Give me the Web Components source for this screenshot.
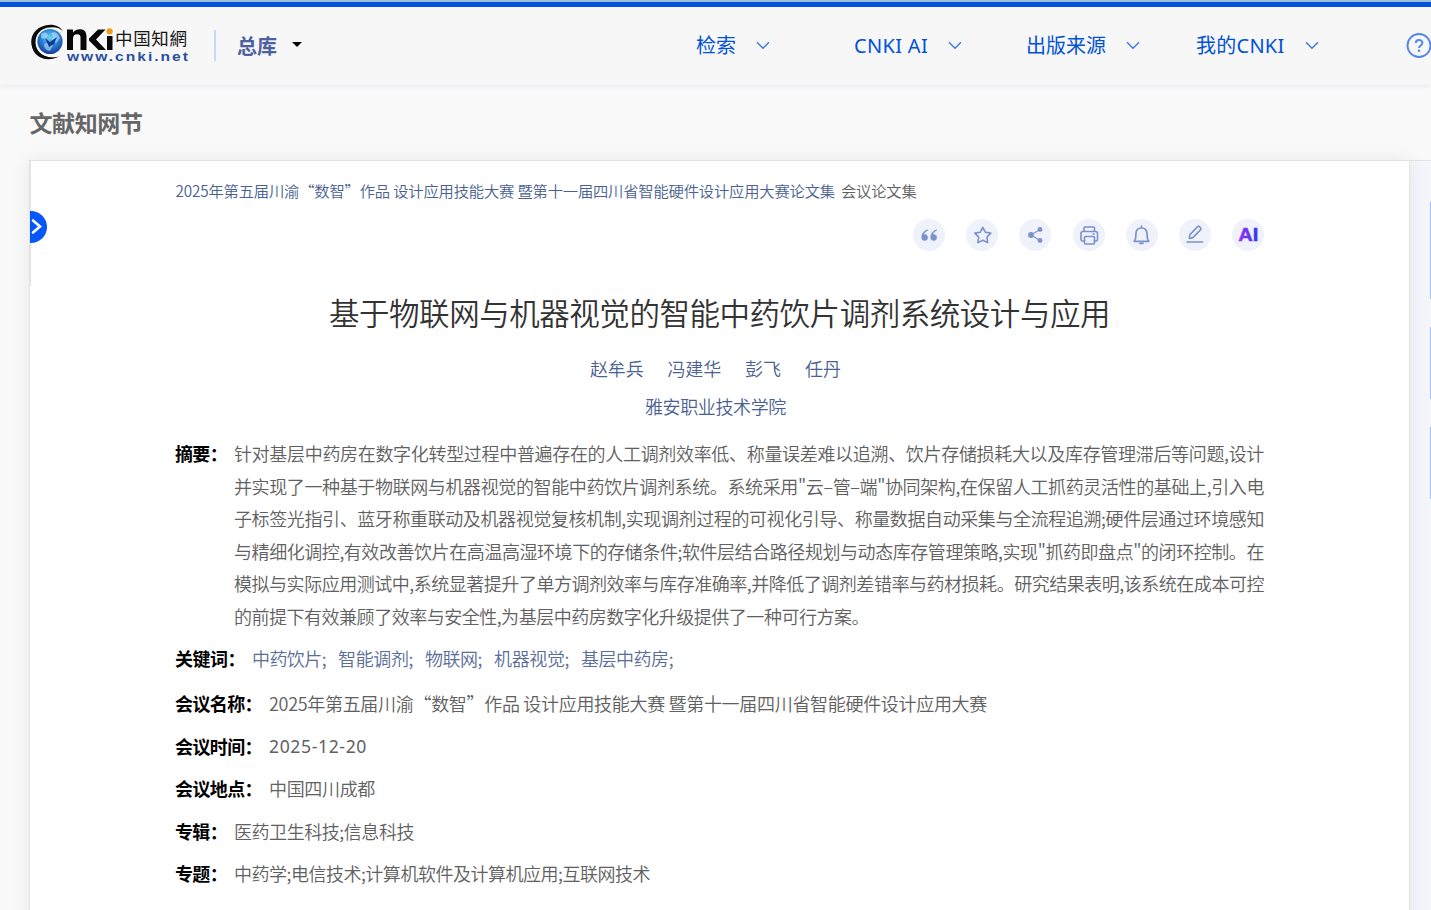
<!DOCTYPE html>
<html lang="zh-CN">
<head>
<meta charset="utf-8">
<title>文献知网节</title>
<style>
html,body{margin:0;height:910px;overflow:hidden}
body{background:#f9f9f9;font-family:"Noto Sans CJK SC",sans-serif}
</style>
</head>
<body>
<cnki-page></cnki-page>
<script>
/* A single line of text, spaced so that it spans exactly the width "w". */
class FitText extends HTMLElement{
  connectedCallback(){
    const root=this.attachShadow({mode:'open'});
    root.innerHTML='<style>:host{display:block;white-space:pre;flex:none}span{display:inline-block}</style><span><slot></slot></span>';
    this.fit();
    if(document.fonts)document.fonts.ready.then(()=>this.fit());
  }
  fit(){
    const span=this.shadowRoot.querySelector('span'),w=+this.getAttribute('w'),n=[...this.textContent].length;
    this.style.width='auto';
    span.style.letterSpacing='0px';
    const natural=span.getBoundingClientRect().width;
    span.style.letterSpacing=((w-natural)/n)+'px';
    this.style.width=w+'px';
  }
}
customElements.define('fit-text',FitText);

class CnkiLogo extends HTMLElement{
  connectedCallback(){
    this.attachShadow({mode:'open'}).innerHTML=`<style>:host{display:block;width:160px;height:44px}svg{display:block}</style>
<svg width="160" height="44" viewBox="0 0 160 44">
<defs><radialGradient id="g" cx=".5" cy=".35" r=".65"><stop offset="0" stop-color="#6fd3f5"/><stop offset=".5" stop-color="#2b86d8"/><stop offset="1" stop-color="#173a9a"/></radialGradient></defs>
<path d="M33.500 11C31 6 24 3.500 16 5.500C6 8 1 16 2.500 25C4.500 35 13 41.500 28 37.500C17 38.500 8.500 34 7 26C5 17 10 9.500 18 7.800C25 6.300 31 7.500 33.500 11Z" fill="#0b0b0b"/>
<path d="M3 26C5 37 17 43 30 36.500C20 39.500 10 36 6.500 26Z" fill="#0b0b0b"/>
<circle cx="21" cy="21.500" r="12.600" fill="url(#g)"/>
<path d="M12 14q4-4 7 1l-2 4-5-1zM22 13q6-3 9 5l-4 5-4-3 1-4zM15 24q6-3 9 1l-3 6q-6-1-6-7z" fill="#d9f5ff" opacity=".5"/>
<path d="M16 18l5 4 7-5-3 7-5 3z" fill="#103b91"/>
<path d="M38 30V9.500h6v3q3-3.500 7.500-3.200 6 .4 6 7v13.700h-6V17.500q0-3.300-3.300-3.300-4.200 0-4.200 4.300v11.500z" fill="#080808"/>
<path d="M69 9.500h7.500L67 19.500l10 10.500H69.500L60 20.500v-2z" fill="#080808"/>
<path d="M78 16h5.500v14H78z" fill="#080808"/><circle cx="80.600" cy="11.300" r="3.100" fill="#f39b12"/>
<text x="86" y="25" font-family="Noto Sans CJK SC" font-size="17.500" font-weight="400" fill="#161616" textLength="72" lengthAdjust="spacing">中国知網</text>
<text transform="translate(38 41) scale(1.300 1)" x="0" y="0" font-family="Liberation Sans" font-size="12" font-weight="700" fill="#284fa0" textLength="93" lengthAdjust="spacing">www.cnki.net</text>
</svg>`;
  }
}
customElements.define('cnki-logo',CnkiLogo);

class NavItem extends HTMLElement{
  connectedCallback(){
    this.attachShadow({mode:'open'}).innerHTML=`<style>
:host{display:flex;align-items:center;color:#0052d9;font:400 20px/30px "Noto Sans","Noto Sans CJK SC",sans-serif}
svg{display:block;flex:none;margin:-2px 0 0 20px}</style><slot></slot>
<svg width="14" height="9" viewBox="0 0 14 9"><path d="M1 1.300l6 6 6-6" fill="none" stroke="#3c78e2" stroke-width="1.400"/></svg>`;
  }
}
customElements.define('nav-item',NavItem);

class SiteHeader extends HTMLElement{
  connectedCallback(){
    this.attachShadow({mode:'open'}).innerHTML=`<style>
:host{display:flex;box-sizing:border-box;height:85px;padding-top:7px;background:linear-gradient(#a0bdd9 0 2px,#0052d9 2px 7px,#f7f7f7 7px);box-shadow:0 1px 4px #e6eaf0;position:relative}
cnki-logo{margin:13px 0 0 29px;width:160px;flex:none}
.rule{width:2px;height:31px;background:#c5d9fa;margin:23px 0 0 25px;flex:none}
.lib{margin:23.500px 0 0 21px;color:#4c61a0;font:700 20px/30px "Noto Sans CJK SC";flex:none}
.caret{width:0;height:0;border:5px solid transparent;border-top-color:#000;border-bottom:0;margin:35px 0 0 15px;flex:none}
nav{display:grid;grid-template-columns:158px 172px 170px 210px;margin:24px 0 0 394px;height:30px;flex:none}
.help{margin:25px 0 0 0;flex:none}
svg{display:block}
</style>
<cnki-logo></cnki-logo><div class="rule"></div><fit-text class="lib" w="40">总库</fit-text><div class="caret"></div>
<nav><nav-item><fit-text w="40">检索</fit-text></nav-item><nav-item><fit-text w="74">CNKI AI</fit-text></nav-item><nav-item><fit-text w="80">出版来源</fit-text></nav-item><nav-item><fit-text w="88.500">我的CNKI</fit-text></nav-item></nav>
<svg class="help" width="26" height="26" viewBox="0 0 26 26"><circle cx="13" cy="13.500" r="11.500" fill="none" stroke="#5288e8" stroke-width="1.900"/><path d="M9.800 11c0-4 6.600-4 6.600 0 0 2.300-3.300 2.300-3.300 5" fill="none" stroke="#5288e8" stroke-width="2"/><circle cx="13" cy="18.800" r="1.300" fill="#5288e8"/></svg>`;
  }
}
customElements.define('site-header',SiteHeader);

const ICONS={
quote:'<path d="M14.300 10.800c-3.700 1-5.600 4.200-5.600 7.700a3 3 0 1 0 3-3h-.8c.3-1.700 1.500-3 3.600-4zM23.300 10.800c-3.700 1-5.600 4.200-5.600 7.700a3 3 0 1 0 3-3h-.8c.3-1.700 1.500-3 3.600-4z" fill="#7b93cb" stroke-width=".5"/>',
star:'<path d="M16.800 8.300l2.500 4.900 5.500.9-3.900 4 .8 5.500-4.900-2.400-4.900 2.400.8-5.500-3.900-4 5.500-.9z"/>',
share:'<path d="M21 10.500l-9 5.500 9 5.500" stroke-width="1.100"/><g fill="#7b93cb" stroke="none"><circle cx="21" cy="10.500" r="2.400"/><circle cx="12" cy="16" r="2.900"/><circle cx="21" cy="21.500" r="2.400"/></g>',
print:'<path d="M11 12V9q0-1 1-1h8.500q1 0 1 1v3M11.500 22H9.500q-1.500 0-1.500-1.500v-6q0-2 2-2h12.500q2 0 2 2v6q0 1.500-1.500 1.500h-2"/><rect x="11.500" y="17.500" width="10" height="7.500" rx="1"/><path d="M20 15h1"/>',
bell:'<path d="M8.200 22.300h14.600c-1.500-1.500-1.700-3-1.700-7.300 0-3.500-2-6-5.600-6s-5.600 2.500-5.600 6c0 4.300-.2 5.800-1.700 7.300zM15.500 7v2M14 24.300h3" stroke-width="1.700"/>',
edit:'<path d="M10.300 19.500l.6-3.900 7.800-8q.8-.8 1.600 0l1.400 1.400q.8.800 0 1.600l-7.800 8zM8 23h15.500"/>',
ai:'<defs><linearGradient id="a"><stop offset="0" stop-color="#9b35f4"/><stop offset="1" stop-color="#2d35f7"/></linearGradient></defs><text x="6.300" y="22" font-family="Liberation Sans" font-size="18" font-weight="700" fill="url(#a)" stroke="url(#a)" stroke-width=".5" textLength="20" lengthAdjust="spacingAndGlyphs">AI</text>'};
class ToolIcon extends HTMLElement{
  connectedCallback(){
    this.attachShadow({mode:'open'}).innerHTML=`<style>:host{display:block;width:32px;height:32px;border-radius:50%;background:#eff2fa}svg{display:block}</style>
<svg width="32" height="32" viewBox="0 0 32 32" fill="none" stroke="#7b93cb" stroke-width="1.600" stroke-linejoin="round" stroke-linecap="round">${ICONS[this.getAttribute('name')]}</svg>`;
  }
}
customElements.define('tool-icon',ToolIcon);

class MetaRow extends HTMLElement{
  connectedCallback(){
    this.attachShadow({mode:'open'}).innerHTML=`<style>
:host{display:flex;color:#606060}
.label{color:#000;font-weight:700;margin-right:7px}
.value{display:flex;gap:var(--gap,0);flex:none}
</style><fit-text class="label" w="${this.getAttribute('lw')-7}">${this.getAttribute('label')}</fit-text><div class="value"><slot></slot></div>`;
  }
}
customElements.define('meta-row',MetaRow);

class PaperCard extends HTMLElement{
  connectedCallback(){
    this.attachShadow({mode:'open'}).innerHTML=`<style>
:host{display:block;position:relative;box-sizing:border-box;width:1381px;height:770px;background:#fff;border:1px solid #e3e3e3;border-bottom:0;box-shadow:0 0 20px rgba(0,0,0,.07);font:350 18px/32.600px "Noto Sans CJK SC",sans-serif;color:#606060}
.edge{position:absolute;left:0;top:0;width:1px;height:125px;background:#e3e3e3}
.toggle{position:absolute;left:0;top:50px}
svg{display:block}
.source{display:flex;gap:6px;padding:17px 0 0 145.500px;font-size:15.300px;line-height:24px;color:#4a5f92}
.tools{display:flex;gap:21.200px;margin:17px 0 0 883px}
h1{margin:38px 0 0 299px;font-size:30.500px;font-weight:350;line-height:46px;color:#333}
.authors{display:flex;gap:24px;margin:19px 0 0 560px;line-height:28px;color:#4a5f92}
.org{margin:10px 0 0 615px;line-height:28px;color:#4a5f92}
.abs{margin:17px 0 0 145px}
.lines{display:block}
.kw{--gap:12px}
meta-row{margin-left:145px;line-height:26px}
</style>
<div class="edge"></div>
<svg class="toggle" width="17" height="32" viewBox="1 0 17 32"><path d="M0 0h2a16 16 0 0 1 0 32H0z" fill="#0657f9"/><path d="M4 9.500l7 6-7 6" fill="none" stroke="#fff" stroke-width="2.600" stroke-linecap="round"/></svg>
<div class="source"><fit-text w="659.500">2025年第五届川渝“数智”作品 设计应用技能大赛 暨第十一届四川省智能硬件设计应用大赛论文集</fit-text><fit-text w="75.500" style="color:#606060">会议论文集</fit-text></div>
<div class="tools">${Object.keys(ICONS).map(k=>`<tool-icon name="${k}"></tool-icon>`).join('')}</div>
<h1><fit-text w="781">基于物联网与机器视觉的智能中药饮片调剂系统设计与应用</fit-text></h1>
<div class="authors"><fit-text w="53.500">赵牟兵</fit-text><fit-text w="53.500">冯建华</fit-text><fit-text w="36">彭飞</fit-text><fit-text w="36">任丹</fit-text></div>
<fit-text class="org" w="141">雅安职业技术学院</fit-text>
<meta-row class="abs" style="line-height:32.600px" label="摘要：" lw="59"><div class="lines">
<fit-text w="1030">针对基层中药房在数字化转型过程中普遍存在的人工调剂效率低、称量误差难以追溯、饮片存储损耗大以及库存管理滞后等问题,设计</fit-text>
<fit-text w="1030">并实现了一种基于物联网与机器视觉的智能中药饮片调剂系统。系统采用"云–管–端"协同架构,在保留人工抓药灵活性的基础上,引入电</fit-text>
<fit-text w="1030">子标签光指引、蓝牙称重联动及机器视觉复核机制,实现调剂过程的可视化引导、称量数据自动采集与全流程追溯;硬件层通过环境感知</fit-text>
<fit-text w="1030">与精细化调控,有效改善饮片在高温高湿环境下的存储条件;软件层结合路径规划与动态库存管理策略,实现"抓药即盘点"的闭环控制。在</fit-text>
<fit-text w="1030">模拟与实际应用测试中,系统显著提升了单方调剂效率与库存准确率,并降低了调剂差错率与药材损耗。研究结果表明,该系统在成本可控</fit-text>
<fit-text w="635">的前提下有效兼顾了效率与安全性,为基层中药房数字化升级提供了一种可行方案。</fit-text></div></meta-row>
<meta-row class="kw" style="margin-top:12px;color:#5a6c98" label="关键词：" lw="77"><fit-text w="74">中药饮片;</fit-text><fit-text w="75">智能调剂;</fit-text><fit-text w="57">物联网;</fit-text><fit-text w="75">机器视觉;</fit-text><fit-text w="92">基层中药房;</fit-text></meta-row>
<meta-row style="margin-top:19px" label="会议名称：" lw="94"><fit-text w="718">2025年第五届川渝“数智”作品 设计应用技能大赛 暨第十一届四川省智能硬件设计应用大赛</fit-text></meta-row>
<meta-row style="margin-top:17px" label="会议时间：" lw="94"><fit-text w="98" style="font-family:'Noto Sans';font-weight:400;font-size:17.600px">2025-12-20</fit-text></meta-row>
<meta-row style="margin-top:16px" label="会议地点：" lw="94"><fit-text w="106">中国四川成都</fit-text></meta-row>
<meta-row style="margin-top:17px" label="专辑：" lw="59"><fit-text w="180">医药卫生科技;信息科技</fit-text></meta-row>
<meta-row style="margin-top:16px" label="专题：" lw="59"><fit-text w="416">中药学;电信技术;计算机软件及计算机应用;互联网技术</fit-text></meta-row>`;
  }
}
customElements.define('paper-card',PaperCard);

class SideRail extends HTMLElement{
  connectedCallback(){
    this.attachShadow({mode:'open'}).innerHTML=`<style>
:host{display:block;box-sizing:border-box;width:21px;height:770px;border-top:1px solid #e3e3e3;background:#f4f6fb;padding:41px 0 0 20px}
div{width:1px;background:#a3c0f5}
</style><div style="height:97px"></div><div style="height:72px;margin-top:28px"></div><div style="height:72px;margin-top:28px"></div>`;
  }
}
customElements.define('side-rail',SideRail);

class CnkiPage extends HTMLElement{
  connectedCallback(){
    this.attachShadow({mode:'open'}).innerHTML=`<style>
:host{display:block;height:910px;overflow:hidden}
h2{margin:19px 0 0 29.500px;height:37px;font:700 23px/37px "Noto Sans CJK SC";color:#666}
.row{display:flex;margin:19px 0 0 29px}
</style><site-header></site-header><h2><fit-text w="113">文献知网节</fit-text></h2><div class="row"><paper-card></paper-card><side-rail></side-rail></div>`;
  }
}
customElements.define('cnki-page',CnkiPage);
</script>
</body>
</html>
